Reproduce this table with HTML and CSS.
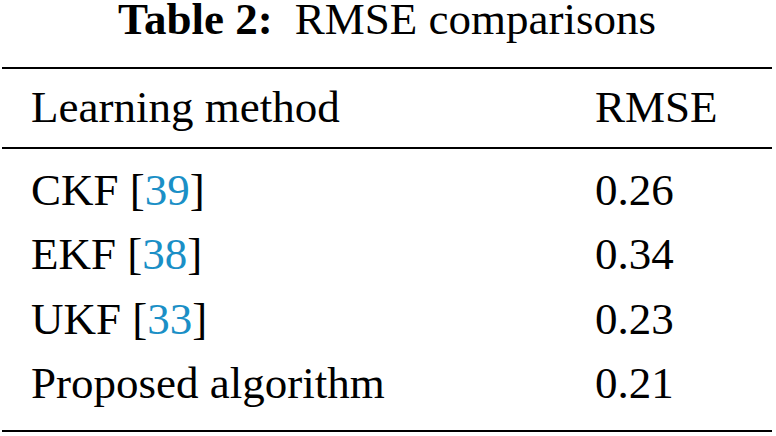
FILE: index.html
```html
<!DOCTYPE html>
<html lang="en">
<head>
    <meta charset="UTF-8">
    <meta name="viewport" content="width=device-width, initial-scale=1.0">
    <title>Table 2: RMSE comparisons</title>
    <link rel="stylesheet" href="styles.css">
</head>
<body>
    <div class="table-wrap">
        <div class="caption"><span class="label">Table 2:</span>RMSE comparisons</div>

        <table class="results">
            <thead>
                <tr>
                    <th class="method">Learning method</th>
                    <th>RMSE</th>
                </tr>
            </thead>
            <tbody>
                <tr>
                    <td class="method">CKF [<a href="#ref39">39</a>]</td>
                    <td>0.26</td>
                </tr>
                <tr>
                    <td class="method">EKF [<a href="#ref38">38</a>]</td>
                    <td>0.34</td>
                </tr>
                <tr>
                    <td class="method">UKF [<a href="#ref33">33</a>]</td>
                    <td>0.23</td>
                </tr>
                <tr>
                    <td class="method">Proposed algorithm</td>
                    <td>0.21</td>
                </tr>
            </tbody>
        </table>
    </div>
</body>
</html>
```

FILE: styles.css
```css
body {
    font-family: "Liberation Serif", "Times New Roman", serif;
    background-color: #fff;
    color: #000;
    margin: 0;
}

.table-wrap {
    padding: 0 4px 0 2px;
}

.caption {
    font-size: 45px;
    line-height: 38px;
    text-align: center;
    margin-bottom: 29px;
}

.caption .label {
    font-weight: bold;
    margin-right: 22px;
}

.results {
    width: 100%;
    table-layout: fixed;
    border-collapse: collapse;
    border-top: 2px solid #000;
    border-bottom: 2px solid #000;
    font-size: 45px;
    line-height: 64.5px;
}

.results th,
.results td {
    text-align: left;
    font-weight: normal;
    padding: 0;
    white-space: nowrap;
}

.results .method {
    width: 564px;
    padding-left: 29px;
}

.results thead th {
    padding-top: 6px;
    padding-bottom: 7px;
    border-bottom: 2px solid #000;
}

.results tbody tr:first-child td {
    padding-top: 9px;
}

.results tbody tr:last-child td {
    padding-bottom: 14px;
}

.results a {
    color: #1a8fc6;
    text-decoration: none;
}
```
